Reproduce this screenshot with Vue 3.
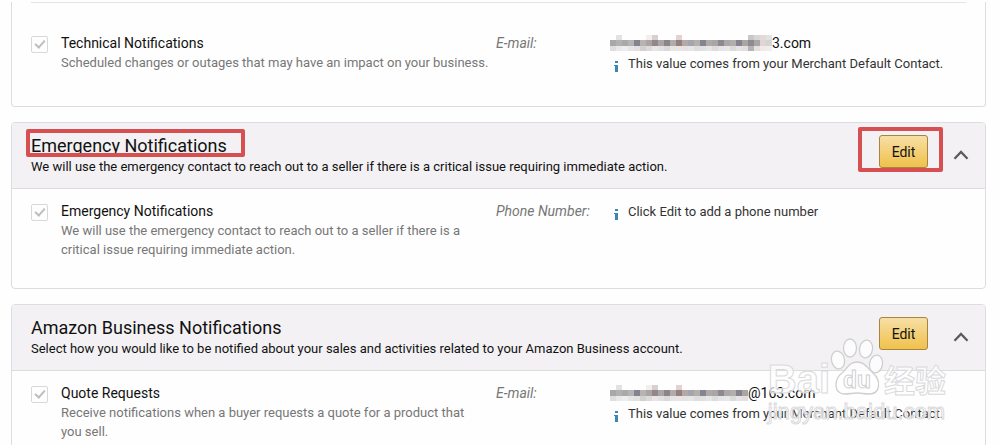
<template>
  <main class="page">
    <section
      v-for="panel in panels"
      :key="panel.id"
      class="panel"
      :class="{ continued: !panel.title }"
    >
      <header v-if="panel.title" class="panel-header">
        <div class="heading">
          <h2>
            <span>{{ panel.title }}</span>
            <span v-if="panel.highlight" class="mark mark-title"></span>
          </h2>
          <p>{{ panel.summary }}</p>
        </div>

        <div class="actions">
          <div class="edit-wrap">
            <button class="edit-btn" type="button">Edit</button>
            <span v-if="panel.highlight" class="mark mark-edit"></span>
          </div>
          <button class="toggle-btn" type="button" :aria-label="'Collapse ' + panel.title">
            <svg viewBox="0 0 16 10" width="16" height="10">
              <path d="M1.5 8.7 8 2l6.500 6.700" fill="none" stroke="#5c5c60" stroke-width="2.300" />
            </svg>
          </button>
        </div>
      </header>

      <div class="row">
        <input :id="panel.id" type="checkbox" checked disabled />
        <div class="topic">
          <label :for="panel.id">{{ panel.topic }}</label>
          <p>{{ panel.description }}</p>
        </div>
        <em>{{ panel.field }}</em>
        <div class="value">
          <div v-if="panel.email" class="email">
            <svg
              class="mosaic"
              :width="panel.cells * 6"
              height="16"
              :viewBox="'0 0 ' + panel.cells * 6 + ' 16'"
              shape-rendering="crispEdges"
            >
              <g v-for="(shade, i) in shades.slice(0, panel.cells)" :key="i">
                <rect :x="i * 6" y="0" width="6" height="5" :fill="shade[0]" />
                <rect :x="i * 6" y="5" width="6" height="6" :fill="shade[1]" />
                <rect :x="i * 6" y="11" width="6" height="5" :fill="shade[2]" />
              </g>
            </svg>
            <span>{{ panel.email }}</span>
          </div>
          <p class="note">
            <svg viewBox="0 0 4 11" width="4" height="11">
              <path d="M1 0h3v2H1zM0 4h4v7H1V5H0z" fill="#3c86b4" />
            </svg>
            <span>{{ panel.note }}</span>
          </p>
        </div>
      </div>
    </section>

    <div class="watermark">
      <div class="brand">
        <span class="latin">Bai</span>
        <svg class="paw" viewBox="0 0 54 58" width="54" height="58">
          <g fill="#fff" fill-opacity="0.75" stroke="#cfcfd1" stroke-width="1.300">
            <ellipse cx="8" cy="22" rx="6.500" ry="9" transform="rotate(-12 8 22)" />
            <ellipse cx="20" cy="10" rx="6.500" ry="9" />
            <ellipse cx="36" cy="11" rx="6.500" ry="9" transform="rotate(10 36 11)" />
            <ellipse cx="46" cy="26" rx="6.500" ry="9" transform="rotate(10 46 26)" />
            <path d="M27 24c-8 0-10 7-15 11-8 6-9 21 3 21 5 0 7-1 12-1s7 1 12 1c12 0 12-14 4-21-6-5-8-11-16-11z" />
          </g>
          <text x="27" y="50" text-anchor="middle">du</text>
        </svg>
        <span class="cjk">经验</span>
      </div>
      <div class="site">jingyan.baidu.com</div>
    </div>
  </main>
</template>

<script setup>
const merchantNote = "This value comes from your Merchant Default Contact."

const panels = [
  {
    id: "technical",
    topic: "Technical Notifications",
    description: "Scheduled changes or outages that may have an impact on your business.",
    field: "E-mail:",
    email: "3.com",
    cells: 27,
    note: merchantNote
  },
  {
    id: "emergency",
    title: "Emergency Notifications",
    summary:
      "We will use the emergency contact to reach out to a seller if there is a critical issue requiring immediate action.",
    highlight: true,
    topic: "Emergency Notifications",
    description:
      "We will use the emergency contact to reach out to a seller if there is a critical issue requiring immediate action.",
    field: "Phone Number:",
    note: "Click Edit to add a phone number"
  },
  {
    id: "quote",
    title: "Amazon Business Notifications",
    summary:
      "Select how you would like to be notified about your sales and activities related to your Amazon Business account.",
    topic: "Quote Requests",
    description: "Receive notifications when a buyer requests a quote for a product that you sell.",
    field: "E-mail:",
    email: "@163.com",
    cells: 23,
    note: merchantNote
  }
]

// top, middle and bottom shade for each column of the hidden address
const shades = [
  ["#fefefe", "#aaa8a7", "#dedede"],
  ["#e2e2e2", "#b3b1b0", "#e8e8e8"],
  ["#fefefe", "#aaa9aa", "#ededed"],
  ["#fefefe", "#b4b3b5", "#e5e5e5"],
  ["#fefefe", "#858390", "#e2e1e0"],
  ["#fefefe", "#b6b3b2", "#d2d0d0"],
  ["#f2efef", "#aaa5a4", "#dcdada"],
  ["#d9cfd0", "#948788", "#ebe6e6"],
  ["#fefefe", "#aba5a7", "#e1e1e4"],
  ["#fefefe", "#8c8585", "#dfd8d8"],
  ["#fefefe", "#b2abae", "#e6e5e6"],
  ["#e1d3d3", "#93807f", "#ece4e4"],
  ["#fefefe", "#b3a9a9", "#e5e3e3"],
  ["#fefefe", "#a5a6ad", "#e6e6e6"],
  ["#fefefe", "#b5b0ac", "#dedede"],
  ["#fefefe", "#858591", "#e2e1e1"],
  ["#fefefe", "#b0aaa7", "#e6e6e6"],
  ["#fefefe", "#a9a6a7", "#dddddd"],
  ["#fefefe", "#8d898d", "#e5e5e5"],
  ["#fefefe", "#aaa8aa", "#e8e8e8"],
  ["#fefefe", "#b2aeac", "#dddada"],
  ["#fefefe", "#858391", "#e5e3e4"],
  ["#fefefe", "#aaa5a3", "#e1dfdf"],
  ["#c9c7c9", "#8e8b90", "#b5b3b5"],
  ["#d8d5d5", "#aaa6a8", "#e5e1e1"],
  ["#e2d9da", "#e2d4d5", "#f4e8e9"],
  ["#e3e2e1", "#d2d5d4", "#eeeeee"]
]
</script>

<style>
html,
body {
  background: #fefefe;
}
</style>

<style scoped>
.page {
  height: 100vh;
  padding: 0 14px 0 11px;
  box-sizing: border-box;
  overflow: hidden;
  position: relative;
  font-family: Roboto, "Noto Sans", sans-serif;
  font-size: 13px;
  line-height: 20px;
  color: #111;
}

h2,
p {
  margin: 0;
}

.panel {
  border: 1px solid #dddde0;
  border-radius: 4px;
  margin-bottom: 15px;
  background: #fefefe;
}

.panel-header {
  display: flex;
  justify-content: space-between;
  align-items: flex-start;
  padding: 12px 16px 11px 19px;
  background: #f3f1f4;
  border-bottom: 1px solid #dddde0;
  border-radius: 3px 3px 0 0;
}

h2 {
  position: relative;
  width: max-content;
  font-size: 18px;
  line-height: 22px;
  font-weight: 400;
}

.actions {
  display: flex;
  align-items: center;
  gap: 25px;
}

.edit-wrap {
  position: relative;
}

.edit-btn {
  display: block;
  width: 49px;
  height: 33px;
  padding: 0;
  border: 1px solid #a5853f;
  border-radius: 3px;
  background: linear-gradient(#f7dfa5, #f0c14b);
  font: inherit;
  font-size: 14px;
  color: #111;
}

.toggle-btn {
  display: flex;
  padding: 6px 0 0;
  border: none;
  background: none;
}

.mark {
  position: absolute;
  border: 4px solid #d65052;
  border-radius: 2px;
}

.mark-title {
  inset: -6px -18px 0 -5px;
}

.mark-edit {
  inset: -8px -15px -4px -21px;
}

.row {
  display: grid;
  grid-template-columns: 30px 435fr 114px 356fr;
  align-items: start;
  padding: 12px 19px 29px;
}

.continued {
  border-top: none;
  border-radius: 0 0 4px 4px;
}

.continued .row {
  margin: 2px 19px 0;
  padding: 30px 0 31px;
  border-top: 1px solid #e4e4e6;
}

input[type="checkbox"] {
  appearance: none;
  width: 17px;
  height: 17px;
  margin: 3px 0 0;
  border: 1px solid #d8d8d8;
  border-radius: 2px;
  background: #fefefe;
  position: relative;
}

input[type="checkbox"]::after {
  content: "";
  position: absolute;
  left: 5px;
  top: 1px;
  width: 4px;
  height: 8px;
  border: solid #bdbdbd;
  border-width: 0 2px 2px 0;
  transform: rotate(42deg);
}

.topic label {
  display: block;
  font-size: 14px;
}

.topic p {
  padding-right: 16px;
  line-height: 19px;
  color: #777;
}

.continued .topic p {
  padding-right: 0;
}

em {
  font-size: 14px;
  color: #777;
}

.email {
  display: flex;
  align-items: center;
  height: 20px;
  font-size: 14px;
}

.note {
  display: flex;
  align-items: center;
  gap: 10px;
  padding-left: 4px;
  line-height: 22px;
  color: #333;
}

.note svg {
  margin-top: 4px;
}

.watermark {
  position: absolute;
  right: 54px;
  bottom: 22px;
  color: rgba(255, 255, 255, 0.7);
  -webkit-text-stroke: 1px #dadadc;
  pointer-events: none;
}

.brand {
  display: flex;
  align-items: flex-end;
  margin-bottom: 5px;
}

.latin {
  font-family: "Liberation Sans", sans-serif;
  font-size: 40px;
  line-height: 34px;
  font-weight: 700;
}

.paw text {
  font: 700 23px "Liberation Sans", sans-serif;
  fill: #fff;
  stroke: #cfcfd1;
  stroke-width: 1px;
}

.cjk {
  font-family: "Noto Sans CJK SC", sans-serif;
  font-size: 31px;
  line-height: 34px;
  font-weight: 700;
}

.site {
  font-family: "Liberation Sans", sans-serif;
  font-size: 22px;
  line-height: 22px;
}
</style>
